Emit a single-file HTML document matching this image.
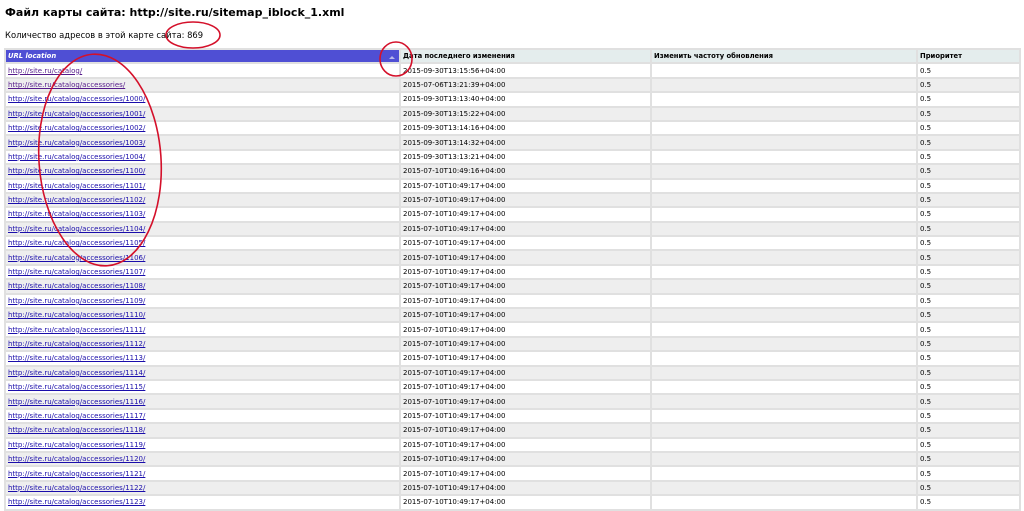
<!DOCTYPE html>
<html><head><meta charset="utf-8"><style>
body{margin:0;background:#fff;font-family:"DejaVu Sans","Liberation Sans",sans-serif;position:relative;width:1024px;height:500px;overflow:hidden}
h1{position:absolute;left:5px;top:6px;margin:0;font-size:11px;font-weight:bold;color:#000;white-space:nowrap}
.cnt{position:absolute;left:5px;top:30px;font-size:8.4px;white-space:nowrap}
table{position:absolute;left:4px;top:48px;border-collapse:separate;border-spacing:2px;background:#e0e0e0;width:1017px;font-size:7px;table-layout:fixed}
td,th{height:12.4px;padding:0 2px;text-align:left;white-space:nowrap;overflow:hidden;line-height:12px}
th{background:#e4eded;font-weight:bold;color:#000;font-size:6.8px}
th.u{background:#4f4fd4;color:#fff;font-style:italic;position:relative}
th.u:after{content:"";position:absolute;right:4px;top:6px;border-left:3px solid transparent;border-right:3px solid transparent;border-bottom:3px solid #b8b8e8}
tr:nth-child(odd) td{background:#fff}
tr:nth-child(even) td{background:#eeeeee}
a{color:#1a0dab;text-decoration:underline}
a.v{color:#551a8b}
svg{position:absolute;left:0;top:0}
</style></head><body>
<h1>Файл карты сайта: http://site.ru/sitemap_iblock_1.xml</h1>
<div class="cnt">Количество адресов в этой карте сайта: 869</div>
<table>
<colgroup><col style="width:393px"><col style="width:249px"><col style="width:264px"><col></colgroup>
<thead><tr><th class="u">URL location</th><th>Дата последнего изменения</th><th>Изменить частоту обновления</th><th>Приоритет</th></tr></thead>
<tbody>
<tr><td><a class="v">http://site.ru/catalog/</a></td><td>2015-09-30T13:15:56+04:00</td><td></td><td>0.5</td></tr>
<tr><td><a class="v">http://site.ru/catalog/accessories/</a></td><td>2015-07-06T13:21:39+04:00</td><td></td><td>0.5</td></tr>
<tr><td><a>http://site.ru/catalog/accessories/1000/</a></td><td>2015-09-30T13:13:40+04:00</td><td></td><td>0.5</td></tr>
<tr><td><a>http://site.ru/catalog/accessories/1001/</a></td><td>2015-09-30T13:15:22+04:00</td><td></td><td>0.5</td></tr>
<tr><td><a>http://site.ru/catalog/accessories/1002/</a></td><td>2015-09-30T13:14:16+04:00</td><td></td><td>0.5</td></tr>
<tr><td><a>http://site.ru/catalog/accessories/1003/</a></td><td>2015-09-30T13:14:32+04:00</td><td></td><td>0.5</td></tr>
<tr><td><a>http://site.ru/catalog/accessories/1004/</a></td><td>2015-09-30T13:13:21+04:00</td><td></td><td>0.5</td></tr>
<tr><td><a>http://site.ru/catalog/accessories/1100/</a></td><td>2015-07-10T10:49:16+04:00</td><td></td><td>0.5</td></tr>
<tr><td><a>http://site.ru/catalog/accessories/1101/</a></td><td>2015-07-10T10:49:17+04:00</td><td></td><td>0.5</td></tr>
<tr><td><a>http://site.ru/catalog/accessories/1102/</a></td><td>2015-07-10T10:49:17+04:00</td><td></td><td>0.5</td></tr>
<tr><td><a>http://site.ru/catalog/accessories/1103/</a></td><td>2015-07-10T10:49:17+04:00</td><td></td><td>0.5</td></tr>
<tr><td><a>http://site.ru/catalog/accessories/1104/</a></td><td>2015-07-10T10:49:17+04:00</td><td></td><td>0.5</td></tr>
<tr><td><a>http://site.ru/catalog/accessories/1105/</a></td><td>2015-07-10T10:49:17+04:00</td><td></td><td>0.5</td></tr>
<tr><td><a>http://site.ru/catalog/accessories/1106/</a></td><td>2015-07-10T10:49:17+04:00</td><td></td><td>0.5</td></tr>
<tr><td><a>http://site.ru/catalog/accessories/1107/</a></td><td>2015-07-10T10:49:17+04:00</td><td></td><td>0.5</td></tr>
<tr><td><a>http://site.ru/catalog/accessories/1108/</a></td><td>2015-07-10T10:49:17+04:00</td><td></td><td>0.5</td></tr>
<tr><td><a>http://site.ru/catalog/accessories/1109/</a></td><td>2015-07-10T10:49:17+04:00</td><td></td><td>0.5</td></tr>
<tr><td><a>http://site.ru/catalog/accessories/1110/</a></td><td>2015-07-10T10:49:17+04:00</td><td></td><td>0.5</td></tr>
<tr><td><a>http://site.ru/catalog/accessories/1111/</a></td><td>2015-07-10T10:49:17+04:00</td><td></td><td>0.5</td></tr>
<tr><td><a>http://site.ru/catalog/accessories/1112/</a></td><td>2015-07-10T10:49:17+04:00</td><td></td><td>0.5</td></tr>
<tr><td><a>http://site.ru/catalog/accessories/1113/</a></td><td>2015-07-10T10:49:17+04:00</td><td></td><td>0.5</td></tr>
<tr><td><a>http://site.ru/catalog/accessories/1114/</a></td><td>2015-07-10T10:49:17+04:00</td><td></td><td>0.5</td></tr>
<tr><td><a>http://site.ru/catalog/accessories/1115/</a></td><td>2015-07-10T10:49:17+04:00</td><td></td><td>0.5</td></tr>
<tr><td><a>http://site.ru/catalog/accessories/1116/</a></td><td>2015-07-10T10:49:17+04:00</td><td></td><td>0.5</td></tr>
<tr><td><a>http://site.ru/catalog/accessories/1117/</a></td><td>2015-07-10T10:49:17+04:00</td><td></td><td>0.5</td></tr>
<tr><td><a>http://site.ru/catalog/accessories/1118/</a></td><td>2015-07-10T10:49:17+04:00</td><td></td><td>0.5</td></tr>
<tr><td><a>http://site.ru/catalog/accessories/1119/</a></td><td>2015-07-10T10:49:17+04:00</td><td></td><td>0.5</td></tr>
<tr><td><a>http://site.ru/catalog/accessories/1120/</a></td><td>2015-07-10T10:49:17+04:00</td><td></td><td>0.5</td></tr>
<tr><td><a>http://site.ru/catalog/accessories/1121/</a></td><td>2015-07-10T10:49:17+04:00</td><td></td><td>0.5</td></tr>
<tr><td><a>http://site.ru/catalog/accessories/1122/</a></td><td>2015-07-10T10:49:17+04:00</td><td></td><td>0.5</td></tr>
<tr><td><a>http://site.ru/catalog/accessories/1123/</a></td><td>2015-07-10T10:49:17+04:00</td><td></td><td>0.5</td></tr>
</tbody></table>
<svg width="1024" height="500">
<g fill="none" stroke="#d4102a" stroke-width="1.6">
<ellipse cx="193" cy="35" rx="27" ry="13"/>
<ellipse cx="396" cy="59" rx="16" ry="17"/>
<ellipse cx="100" cy="160" rx="61" ry="106" transform="rotate(-4 100 160)"/>
</g></svg>
</body></html>
